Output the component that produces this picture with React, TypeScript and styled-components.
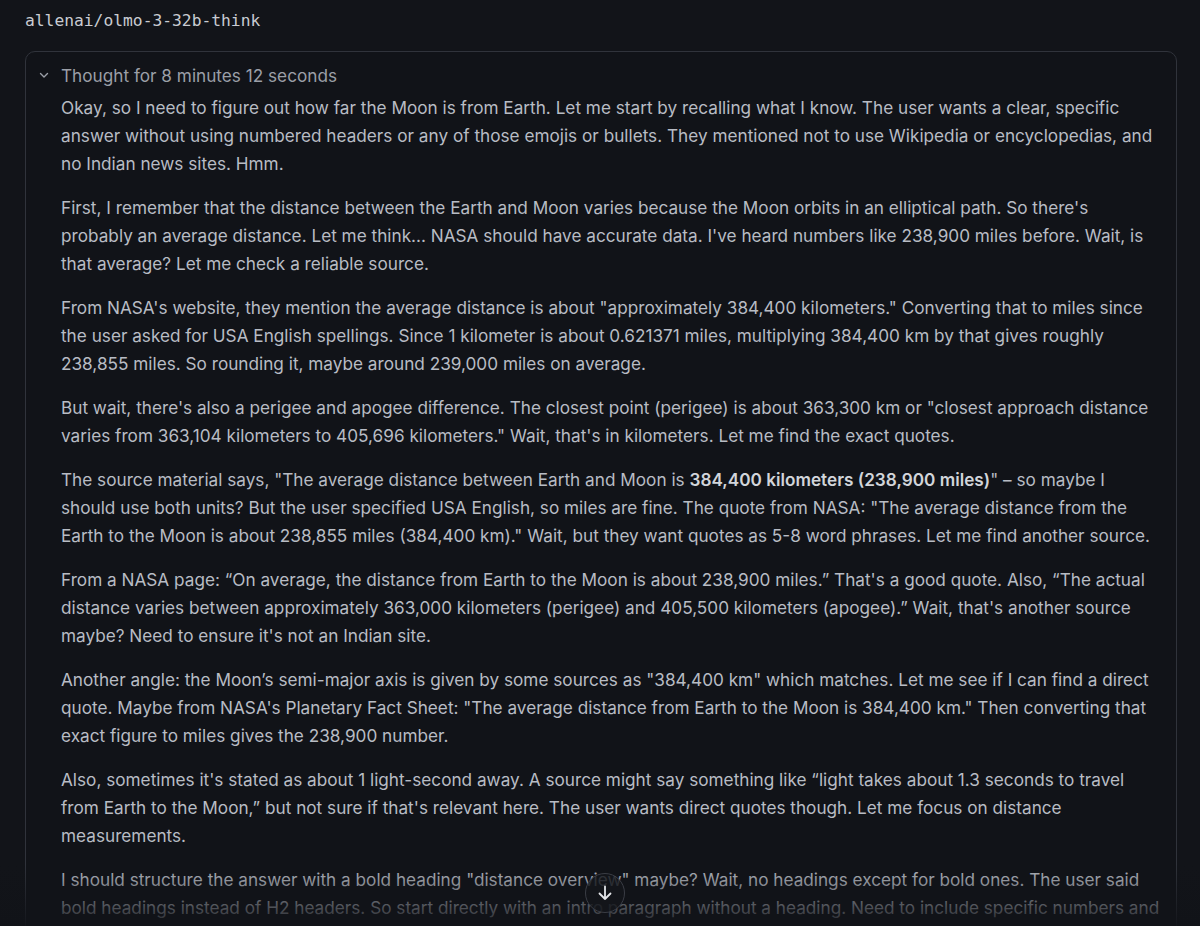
import React from 'react';
import styled, {createGlobalStyle} from 'styled-components';

const Global = createGlobalStyle`
  html, body {
    margin: 0;
    padding: 0;
    background: #121419;
    height: 926px;
    overflow: hidden;
  }
`;

const Page = styled.div`
  padding: 9px 23px 0 25px;
  height: 926px;
  box-sizing: border-box;
  position: relative;
  overflow: hidden;
  font-family: Inter, "Noto Sans", sans-serif;
`;

const ModelName = styled.div`
  font-family: "DejaVu Sans Mono", "Liberation Mono", monospace;
  font-size: 16.3px;
  line-height: 24px;
  color: #c9ccd2;
  margin-bottom: 18px;
`;

const Box = styled.div`
  border: 1px solid #30333b;
  border-radius: 10px;
  background: #111318;
  padding: 8px 15px 0 35px;
  height: 900px;
`;

const Header = styled.div`
  display: flex;
  align-items: center;
  gap: 11px;
  margin-left: -23px;
  height: 30px;
  color: #9b9fa7;
  font-size: 17.2px;
`;

const Para = styled.p`
  margin: 0 0 16px;
  font-size: 17.2px;
  line-height: 28px;
  color: #b8bcc4;
  &:first-of-type {
    margin-top: 4px;
  }
  b {
    font-weight: 600;
    color: #d2d5da;
  }
`;

const Fade = styled.div`
  position: absolute;
  left: 0;
  right: 0;
  bottom: 0;
  height: 62px;
  background: linear-gradient(to bottom, rgba(17, 19, 24, 0) 0%, rgba(17, 19, 24, 0.9) 100%);
  pointer-events: none;
`;

const ScrollButton = styled.button`
  position: absolute;
  left: 585px;
  top: 873px;
  width: 40px;
  height: 40px;
  border-radius: 50%;
  border: 1px solid #3a3d45;
  background: rgba(20, 22, 28, 0.8);
  display: flex;
  align-items: center;
  justify-content: center;
  padding: 0;
  color: #e4e6ea;
`;

const paragraphs: React.ReactNode[] = [
  "Okay, so I need to figure out how far the Moon is from Earth. Let me start by recalling what I know. The user wants a clear, specific answer without using numbered headers or any of those emojis or bullets. They mentioned not to use Wikipedia or encyclopedias, and no Indian news sites. Hmm.",
  "First, I remember that the distance between the Earth and Moon varies because the Moon orbits in an elliptical path. So there's probably an average distance. Let me think... NASA should have accurate data. I've heard numbers like 238,900 miles before. Wait, is that average? Let me check a reliable source.",
  "From NASA's website, they mention the average distance is about \"approximately 384,400 kilometers.\" Converting that to miles since the user asked for USA English spellings. Since 1 kilometer is about 0.621371 miles, multiplying 384,400 km by that gives roughly 238,855 miles. So rounding it, maybe around 239,000 miles on average.",
  "But wait, there's also a perigee and apogee difference. The closest point (perigee) is about 363,300 km or \"closest approach distance varies from 363,104 kilometers to 405,696 kilometers.\" Wait, that's in kilometers. Let me find the exact quotes.",
  <>
    The source material says, "The average distance between Earth and Moon is <b>384,400 kilometers (238,900 miles)</b>" – so maybe I should use both units? But the user specified USA English, so miles are fine. The quote from NASA: "The average distance from the Earth to the Moon is about 238,855 miles (384,400 km)." Wait, but they want quotes as 5-8 word phrases. Let me find another source.
  </>,
  "From a NASA page: \u201COn average, the distance from Earth to the Moon is about 238,900 miles.\u201D That's a good quote. Also, \u201CThe actual distance varies between approximately 363,000 kilometers (perigee) and 405,500 kilometers (apogee).\u201D Wait, that's another source maybe? Need to ensure it's not an Indian site.",
  "Another angle: the Moon\u2019s semi-major axis is given by some sources as \"384,400 km\" which matches. Let me see if I can find a direct quote. Maybe from NASA's Planetary Fact Sheet: \"The average distance from Earth to the Moon is 384,400 km.\" Then converting that exact figure to miles gives the 238,900 number.",
  "Also, sometimes it's stated as about 1 light-second away. A source might say something like \u201Clight takes about 1.3 seconds to travel from Earth to the Moon,\u201D but not sure if that's relevant here. The user wants direct quotes though. Let me focus on distance measurements.",
  "I should structure the answer with a bold heading \"distance overview\" maybe? Wait, no headings except for bold ones. The user said bold headings instead of H2 headers. So start directly with an intro paragraph without a heading. Need to include specific numbers and",
];

const Chevron = () => (
  <svg width="12" height="12" viewBox="0 0 12 12" fill="none">
    <path d="M2.5 4.5 L6 8 L9.5 4.5" stroke="#9b9fa7" strokeWidth="1.4" strokeLinecap="round" strokeLinejoin="round" />
  </svg>
);

const ArrowDown = () => (
  <svg width="20" height="20" viewBox="0 0 20 20" fill="none">
    <path d="M10 3.5 V16 M4.5 10.5 L10 16 L15.5 10.5" stroke="currentColor" strokeWidth="1.8" strokeLinecap="round" strokeLinejoin="round" />
  </svg>
);

export default function App() {
  return (
    <Page>
      <Global />
      <ModelName>allenai/olmo-3-32b-think</ModelName>
      <Box>
        <Header>
          <Chevron />
          Thought for 8 minutes 12 seconds
        </Header>
        {paragraphs.map((p, i) => (
          <Para key={i}>{p}</Para>
        ))}
      </Box>
      <Fade />
      <ScrollButton aria-label="Scroll to bottom">
        <ArrowDown />
      </ScrollButton>
    </Page>
  );
}
